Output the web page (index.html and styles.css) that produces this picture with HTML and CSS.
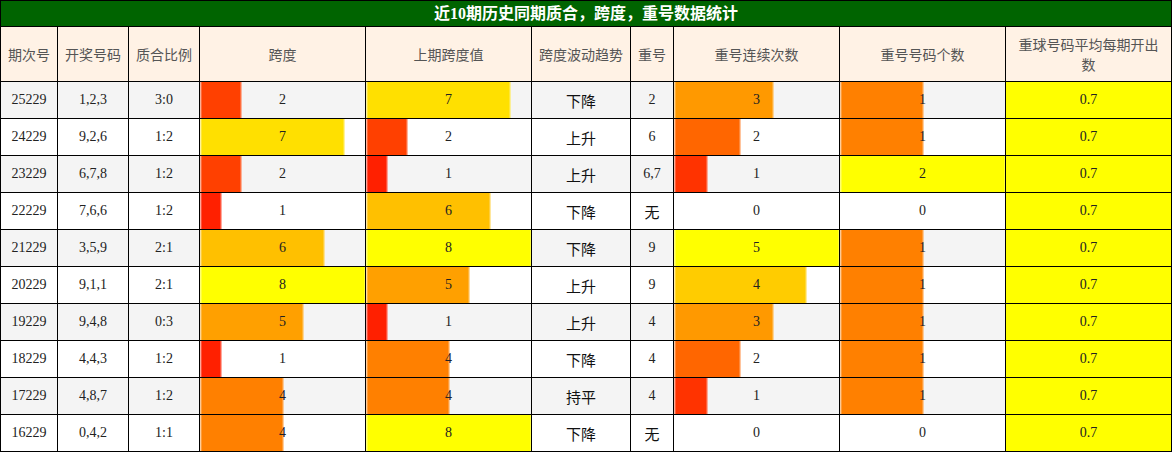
FILE: index.html
```html
<!DOCTYPE html>
<html lang="zh-CN">
<head>
<meta charset="utf-8">
<title>近10期历史同期质合，跨度，重号数据统计</title>
<link rel="stylesheet" href="styles.css">
</head>
<body>
<table class="stats">
  <colgroup>
    <col class="c-issue"><col class="c-num"><col class="c-ratio"><col class="c-bar"><col class="c-bar"><col class="c-trend"><col class="c-rep"><col class="c-bar"><col class="c-bar"><col class="c-bar">
  </colgroup>
  <tr class="title"><td colspan="10">近10期历史同期质合，跨度，重号数据统计</td></tr>
  <tr class="head">
    <th>期次号</th><th>开奖号码</th><th>质合比例</th><th>跨度</th><th>上期跨度值</th><th>跨度波动趋势</th><th>重号</th><th>重号连续次数</th><th>重号号码个数</th><th class="wrap">重球号码平均每期开出数</th>
  </tr>
  <tr class="odd"><td>25229</td><td>1,2,3</td><td>3:0</td><td class="bar" style="--w:25%;--c:#ff4000">2</td><td class="bar" style="--w:87.5%;--c:#ffe000">7</td><td class="cn">下降</td><td>2</td><td class="bar" style="--w:60%;--c:#ff9900">3</td><td class="bar" style="--w:50%;--c:#ff8000">1</td><td class="avg">0.7</td></tr>
  <tr><td>24229</td><td>9,2,6</td><td>1:2</td><td class="bar" style="--w:87.5%;--c:#ffe000">7</td><td class="bar" style="--w:25%;--c:#ff4000">2</td><td class="cn">上升</td><td>6</td><td class="bar" style="--w:40%;--c:#ff6600">2</td><td class="bar" style="--w:50%;--c:#ff8000">1</td><td class="avg">0.7</td></tr>
  <tr class="odd"><td>23229</td><td>6,7,8</td><td>1:2</td><td class="bar" style="--w:25%;--c:#ff4000">2</td><td class="bar" style="--w:12.5%;--c:#ff2000">1</td><td class="cn">上升</td><td>6,7</td><td class="bar" style="--w:20%;--c:#ff3300">1</td><td class="bar" style="--w:100%;--c:#ffff00">2</td><td class="avg">0.7</td></tr>
  <tr><td>22229</td><td>7,6,6</td><td>1:2</td><td class="bar" style="--w:12.5%;--c:#ff2000">1</td><td class="bar" style="--w:75%;--c:#ffc000">6</td><td class="cn">下降</td><td class="cn">无</td><td>0</td><td>0</td><td class="avg">0.7</td></tr>
  <tr class="odd"><td>21229</td><td>3,5,9</td><td>2:1</td><td class="bar" style="--w:75%;--c:#ffc000">6</td><td class="bar" style="--w:100%;--c:#ffff00">8</td><td class="cn">下降</td><td>9</td><td class="bar" style="--w:100%;--c:#ffff00">5</td><td class="bar" style="--w:50%;--c:#ff8000">1</td><td class="avg">0.7</td></tr>
  <tr><td>20229</td><td>9,1,1</td><td>2:1</td><td class="bar" style="--w:100%;--c:#ffff00">8</td><td class="bar" style="--w:62.5%;--c:#ffa000">5</td><td class="cn">上升</td><td>9</td><td class="bar" style="--w:80%;--c:#ffcc00">4</td><td class="bar" style="--w:50%;--c:#ff8000">1</td><td class="avg">0.7</td></tr>
  <tr class="odd"><td>19229</td><td>9,4,8</td><td>0:3</td><td class="bar" style="--w:62.5%;--c:#ffa000">5</td><td class="bar" style="--w:12.5%;--c:#ff2000">1</td><td class="cn">上升</td><td>4</td><td class="bar" style="--w:60%;--c:#ff9900">3</td><td class="bar" style="--w:50%;--c:#ff8000">1</td><td class="avg">0.7</td></tr>
  <tr><td>18229</td><td>4,4,3</td><td>1:2</td><td class="bar" style="--w:12.5%;--c:#ff2000">1</td><td class="bar" style="--w:50%;--c:#ff8000">4</td><td class="cn">下降</td><td>4</td><td class="bar" style="--w:40%;--c:#ff6600">2</td><td class="bar" style="--w:50%;--c:#ff8000">1</td><td class="avg">0.7</td></tr>
  <tr class="odd"><td>17229</td><td>4,8,7</td><td>1:2</td><td class="bar" style="--w:50%;--c:#ff8000">4</td><td class="bar" style="--w:50%;--c:#ff8000">4</td><td class="cn">持平</td><td>4</td><td class="bar" style="--w:20%;--c:#ff3300">1</td><td class="bar" style="--w:50%;--c:#ff8000">1</td><td class="avg">0.7</td></tr>
  <tr><td>16229</td><td>0,4,2</td><td>1:1</td><td class="bar" style="--w:50%;--c:#ff8000">4</td><td class="bar" style="--w:100%;--c:#ffff00">8</td><td class="cn">下降</td><td class="cn">无</td><td>0</td><td>0</td><td class="avg">0.7</td></tr>
</table>
</body>
</html>
```
FILE: styles.css
```css
body {
  margin: 0;
  background: #ffffff;
}

.stats {
  border-collapse: collapse;
  table-layout: fixed;
  width: 1172px;
  font-family: "Liberation Serif", "Noto Sans CJK SC", serif;
  font-size: 14px;
  color: #222222;
}

.c-issue { width: 57px; }
.c-num { width: 71px; }
.c-ratio { width: 71px; }
.c-bar { width: 166px; }
.c-trend { width: 99px; }
.c-rep { width: 43px; }

.stats td,
.stats th {
  border: 1px solid #000000;
  padding: 0;
  text-align: center;
  vertical-align: middle;
}

.title {
  height: 26px;
}

.title td {
  background: #006400;
  color: #ffffff;
  font-weight: bold;
  font-size: 16px;
  line-height: 20px;
}

.head {
  height: 55px;
}

.head th {
  background: #fff2e5;
  color: #555555;
  font-family: "Noto Sans CJK SC", sans-serif;
  font-weight: normal;
  font-size: 14px;
  line-height: 20px;
  white-space: nowrap;
}

.head th.wrap {
  white-space: normal;
  padding: 0 8px;
}

.stats tr:not(.title):not(.head) {
  height: 37px;
}

.odd {
  background: #f4f4f4;
}

.cn {
  font-family: "Noto Sans CJK SC", sans-serif;
  font-size: 15px;
  color: #111111;
}

.avg {
  background: #ffff00;
}

.bar {
  background-image:
    linear-gradient(to right,
      rgba(255, 255, 255, 0.45) 0 1px,
      transparent 1px calc(var(--w) - 1px),
      rgba(255, 255, 255, 0.45) calc(var(--w) - 1px) var(--w),
      transparent var(--w)),
    linear-gradient(to right, var(--c) var(--w), transparent var(--w));
}
```
